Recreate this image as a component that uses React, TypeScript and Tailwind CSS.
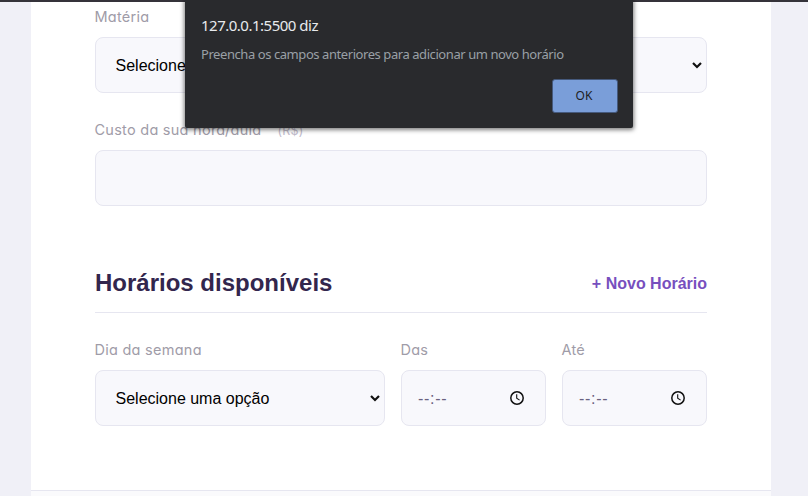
import type { ReactNode } from "react";

const labelFont =
  "font-['Inter',sans-serif] text-[14.5px] leading-[24px] tracking-[0.26px] [font-feature-settings:'cv11'] text-[#9f9ca8] whitespace-pre";
const boxStyle =
  "flex h-14 items-center rounded-lg border border-[#e6e6f0] bg-[#f8f8fc]";

function Label({ children, className = "" }: { children: ReactNode; className?: string }) {
  return <label className={`block -ml-[0.5px] ${labelFont} ${className}`}>{children}</label>;
}

function Chevron() {
  return (
    <svg width="10" height="7" viewBox="0 0 10 7" fill="none" stroke="#101010" strokeWidth="2.2">
      <path d="M1 1l4 4 4-4" />
    </svg>
  );
}

function Select() {
  return (
    <div className={`${boxStyle} justify-between pl-[19.5px] pr-1`}>
      <span className="pt-px font-['Liberation_Sans',sans-serif] text-[16px] text-black">
        Selecione uma opção
      </span>
      <Chevron />
    </div>
  );
}

function TimeField({ label }: { label: string }) {
  return (
    <div className="w-[145px]">
      <Label>{label}</Label>
      <div className={`${boxStyle} mt-2 justify-between pl-4 pr-5`}>
        <span className="pt-px font-['Liberation_Sans',sans-serif] text-[16px] tracking-[0.7px] text-[#6a6180]">
          --:--
        </span>
        <svg width="16" height="16" viewBox="0 0 16 16" fill="none" stroke="#101010">
          <circle cx="8" cy="8" r="6.2" strokeWidth="1.5" />
          <path d="M7.7 4.3v4l2.9 1.8" strokeWidth="1.1" />
        </svg>
      </div>
    </div>
  );
}

function Dialog() {
  return (
    <div className="absolute left-[185px] top-0 flex h-32 w-[448px] flex-col rounded-b-[2px] bg-[#292a2d] px-4 pt-[15px] font-['Noto_Sans',sans-serif] shadow-[0_1px_4px_1px_rgba(0,0,0,0.5)]">
      <p className="text-[15px] leading-5 tracking-[-0.5px] whitespace-nowrap text-[#e8eaed]">
        127.0.0.1:5500 diz
      </p>
      <p className="mt-[9px] text-[13px] leading-5 tracking-[-0.43px] whitespace-nowrap text-[#9aa0a6]">
        Preencha os campos anteriores para adicionar um novo horário
      </p>
      <button className="mt-[15px] mr-[-1px] flex h-[34px] w-[66px] items-center justify-center self-end rounded-[3px] border border-[#45597c] bg-[#7a9ed9] pr-0.5 text-[12px] text-[#202124]">
        OK
      </button>
    </div>
  );
}

export default function App() {
  return (
    <div className="relative h-[496px] w-[808px] overflow-hidden bg-[#f0f0f7]">
      <div className="h-[2px] bg-[#35333a]" />
      <main className="ml-[31px] flex h-[494px] w-[740px] flex-col bg-white">
        <div className="px-16 pt-[3px]">
          <Label>Matéria</Label>
          <div className="mt-2">
            <Select />
          </div>
          <Label className="mt-[25px]">
            Custo da sua hora/aula<span className="ml-4 text-[12.5px] text-[#c1bccc]">(R$)</span>
          </Label>
          <div className={`${boxStyle} mt-[7px]`} />
          <div className="mt-[60px] flex h-[47px] items-start justify-between border-b border-[#e6e6f0] font-['Liberation_Sans',sans-serif] font-bold">
            <h2 className="text-[24px] leading-[34px] whitespace-nowrap text-[#32264d]">
              Horários disponíveis
            </h2>
            <button className="text-[16px] leading-[36px] whitespace-nowrap text-[#774fbe]">
              + Novo Horário
            </button>
          </div>
          <div className="mt-[25px] flex gap-4">
            <div className="w-[290px]">
              <Label>Dia da semana</Label>
              <div className="mt-2">
                <Select />
              </div>
            </div>
            <TimeField label="Das" />
            <TimeField label="Até" />
          </div>
        </div>
        <footer className="mt-auto h-[6px] border-t border-[#e6e6f0] bg-[#fafafc]" />
      </main>
      <Dialog />
    </div>
  );
}
